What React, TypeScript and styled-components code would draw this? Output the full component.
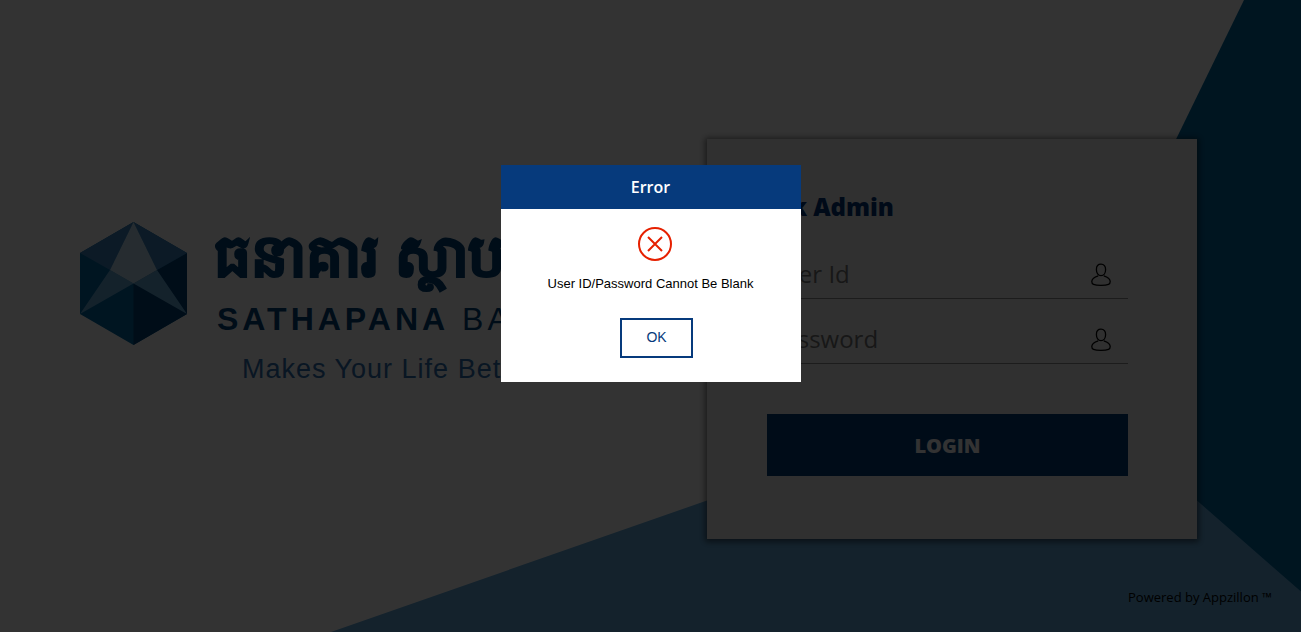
import React from "react";
import styled, { createGlobalStyle } from "styled-components";

const uiFont = '"Open Sans", "Noto Sans", sans-serif';
const plainFont = '"Liberation Sans", Arial, sans-serif';

const GlobalStyle = createGlobalStyle`
  * { box-sizing: border-box; }
  body { margin: 0; background: #fff; font-family: ${uiFont}; color: #000; }
`;

const Page = styled.div`
  position: relative;
  display: flex;
  flex-direction: column;
  min-height: 100vh;
  overflow: hidden;
`;

const Backdrop = styled.svg`
  position: absolute;
  inset: 0;
  width: 100%;
  height: 100%;
`;

const Main = styled.main`
  position: relative;
  flex: 1;
  display: flex;
  justify-content: space-between;
  align-items: flex-start;
  padding: 139px 8% 0 80px;
`;

const Brand = styled.div`
  display: flex;
  gap: 30px;
  margin-top: 83px;
  color: #004178;
  white-space: nowrap;
  font-family: ${plainFont};
`;

const Emblem = styled.svg`
  width: 107px;
  height: 123px;
  flex: none;
`;

const BrandText = styled.div`
  display: flex;
  flex-direction: column;
`;

const KhmerName = styled.div`
  height: 77px;
  margin-left: -3px;
  font-size: 58px;
  line-height: 68px;
  font-weight: 700;
  -webkit-text-stroke: 2px currentColor;
`;

const LatinName = styled.div`
  font-size: 32px;
  line-height: 40px;
  letter-spacing: 4px;
`;

const Tagline = styled.div`
  padding: 14px 0 0 25px;
  font-size: 27px;
  line-height: 32px;
  letter-spacing: 1px;
  color: #2d6eaf;
`;

const Card = styled.form`
  width: 490px;
  flex: none;
  padding: 51px 69px 63px 60px;
  background: #f0f0f0;
  box-shadow: 0 1px 6px 2px rgba(0, 0, 0, 0.5);
`;

const CardTitle = styled.h1`
  margin: 0 0 10px -23px;
  font-size: 24px;
  line-height: 34px;
  font-weight: 800;
  color: #003278;
`;

const Field = styled.label`
  display: flex;
  align-items: center;
  height: 65px;
  padding: 16px 17px 0 0;
  border-bottom: 1px solid #8c8c8c;
`;

const FieldInput = styled.input`
  flex: 1;
  min-width: 0;
  border: 0;
  padding: 0 3px;
  background: transparent;
  font-family: ${uiFont};
  font-size: 24px;
  line-height: 34px;
  outline: none;
  &::placeholder { color: #757575; opacity: 1; }
`;

const PersonIcon = styled.svg`
  width: 20px;
  height: 24px;
  flex: none;
  margin-top: 2px;
`;

const LoginButton = styled.button`
  display: block;
  width: 100%;
  height: 62px;
  margin-top: 50px;
  border: 0;
  background: #003c78;
  color: #fff;
  font-family: ${uiFont};
  font-size: 20px;
  font-weight: 800;
`;

const Footer = styled.footer`
  position: relative;
  padding: 0 29px 25px;
  text-align: right;
  font-size: 13px;
  line-height: 20px;
`;

const Overlay = styled.div`
  position: fixed;
  inset: 0;
  display: flex;
  justify-content: center;
  align-items: flex-start;
  padding-top: 165px;
  background: rgba(0, 0, 0, 0.8);
`;

const Dialog = styled.div`
  display: flex;
  flex-direction: column;
  align-items: center;
  width: 300px;
  padding-bottom: 24px;
  background: #fff;
  font-family: ${plainFont};
`;

const DialogTitle = styled.h2`
  align-self: stretch;
  margin: 0 0 17px;
  background: #063a7c;
  color: #fff;
  text-align: center;
  font-family: ${uiFont};
  font-size: 16px;
  line-height: 44px;
  font-weight: 600;
`;

const ErrorIcon = styled.svg`
  width: 36px;
  height: 36px;
  margin-left: 8px;
`;

const Message = styled.p`
  margin: 12px 0 24px;
  font-size: 13px;
  line-height: 20px;
`;

const OkButton = styled.button`
  width: 73px;
  height: 40px;
  margin-left: 12px;
  padding: 0 0 2px;
  border: 2px solid #063a7c;
  background: #fff;
  color: #063a7c;
  font-family: ${plainFont};
  font-size: 14px;
`;

const Person = () => (
  <PersonIcon viewBox="0 0 20 24" fill="none" stroke="#000" strokeWidth="1.3" aria-hidden="true">
    <path d="M10 1.2c-3 0-4.6 2.1-4.6 5.3 0 3.400 1.700 6.200 4.600 6.200s4.600-2.800 4.600-6.200C14.600 3.300 13 1.200 10 1.200Z" />
    <path d="M7.200 12.800C3.200 14.200.8 15.400.8 18.400c0 1.900.5 2.500 1.700 3 1.600.7 4.300 1 7.500 1s5.900-.3 7.500-1c1.200-.5 1.700-1.100 1.700-3 0-3-2.400-4.200-6.400-5.600" />
  </PersonIcon>
);

export default function App() {
  return (
    <>
      <GlobalStyle />
      <Page>
        <Backdrop viewBox="0 0 1301 632" preserveAspectRatio="none" aria-hidden="true">
          <path d="M1244 0h57v632H1000V500Z" fill="#0069a0" />
          <path d="M331 632 707 500.500 1057 378 1197 500.500 1301 591.500V632Z" fill="#64aadc" />
        </Backdrop>
        <Main>
          <Brand>
            <Emblem viewBox="0 0 107 123" role="img" aria-label="Sathapana Bank">
              <path d="M53.500 0 107 31v61l-53.500 31L0 92V31Z" fill="#0069a5" />
              <path d="M107 31v61l-53.500 31V61.500Z" fill="#004178" />
              <path d="M53.500 0 0 31l30 17ZM53.500 0 107 31 77 48Z" fill="#3c82be" />
              <path d="M0 92 30 48l23.500 13.500ZM107 92 77 48 53.500 61.500Z" fill="#64aad7" />
              <path d="M53.500 0 30 48l23.500 13.500L77 48Z" fill="#bedcf0" />
            </Emblem>
            <BrandText>
              <KhmerName lang="km">ធនាគារ ស្ថាបនា</KhmerName>
              <LatinName><b>SATHAPANA</b> BANK</LatinName>
              <Tagline>Makes Your Life Better</Tagline>
            </BrandText>
          </Brand>
          <Card onSubmit={(e) => e.preventDefault()}>
            <CardTitle>Bank Admin</CardTitle>
            <Field>
              <FieldInput type="text" placeholder="User Id" aria-label="User Id" />
              <Person />
            </Field>
            <Field>
              <FieldInput type="password" placeholder="Password" aria-label="Password" />
              <Person />
            </Field>
            <LoginButton type="submit">LOGIN</LoginButton>
          </Card>
        </Main>
        <Footer>Powered by Appzillon ™</Footer>
      </Page>
      <Overlay>
        <Dialog role="alertdialog" aria-labelledby="error-title" aria-describedby="error-message">
          <DialogTitle id="error-title">Error</DialogTitle>
          <ErrorIcon viewBox="0 0 36 36" fill="none" stroke="#e62000" strokeWidth="2" aria-hidden="true">
            <circle cx="18" cy="18" r="16" />
            <path d="m11 11 14 14M25 11 11 25" />
          </ErrorIcon>
          <Message id="error-message">User ID/Password Cannot Be Blank</Message>
          <OkButton type="button">OK</OkButton>
        </Dialog>
      </Overlay>
    </>
  );
}
